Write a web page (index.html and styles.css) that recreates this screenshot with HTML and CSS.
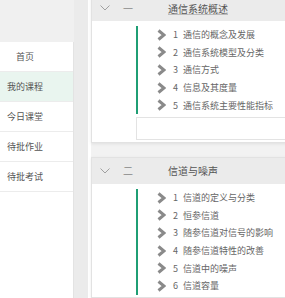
FILE: index.html
```html
<!DOCTYPE html>
<html lang="zh-CN">
<head>
    <meta charset="UTF-8">
    <meta name="viewport" content="width=device-width, initial-scale=1.0">
    <title>我的课程</title>
    <link rel="stylesheet" href="styles.css">
</head>
<body>
    <div class="page">
        <aside class="side">
            <nav class="menu">
                <a class="menu-item">首页</a>
                <a class="menu-item active">我的课程</a>
                <a class="menu-item">今日课堂</a>
                <a class="menu-item">待批作业</a>
                <a class="menu-item">待批考试</a>
            </nav>
        </aside>
        <div class="gutter"></div>

        <main class="main">
            <section class="chapter">
                <div class="chapter-head">
                    <svg class="toggle" width="10" height="6" viewBox="0 0 10 6"><polyline points="0.5,0.5 5,5 9.5,0.5" fill="none" stroke="#a0a0a0" stroke-width="1"/></svg>
                    <span class="chapter-no">一</span>
                    <span class="chapter-title linked">通信系统概述</span>
                </div>
                <div class="chapter-body">
                    <ul class="lessons">
                        <li><svg class="arrow" width="9" height="12" viewBox="0 0 9 12"><polyline points="1.5,1.5 7,6 1.5,10.5" fill="none" stroke="#8a8a8a" stroke-width="3"/></svg><span class="no">1</span>通信的概念及发展</li>
                        <li><svg class="arrow" width="9" height="12" viewBox="0 0 9 12"><polyline points="1.5,1.5 7,6 1.5,10.5" fill="none" stroke="#8a8a8a" stroke-width="3"/></svg><span class="no">2</span>通信系统模型及分类</li>
                        <li><svg class="arrow" width="9" height="12" viewBox="0 0 9 12"><polyline points="1.5,1.5 7,6 1.5,10.5" fill="none" stroke="#8a8a8a" stroke-width="3"/></svg><span class="no">3</span>通信方式</li>
                        <li><svg class="arrow" width="9" height="12" viewBox="0 0 9 12"><polyline points="1.5,1.5 7,6 1.5,10.5" fill="none" stroke="#8a8a8a" stroke-width="3"/></svg><span class="no">4</span>信息及其度量</li>
                        <li><svg class="arrow" width="9" height="12" viewBox="0 0 9 12"><polyline points="1.5,1.5 7,6 1.5,10.5" fill="none" stroke="#8a8a8a" stroke-width="3"/></svg><span class="no">5</span>通信系统主要性能指标</li>
                    </ul>
                    <div class="note-box"></div>
                </div>
            </section>

            <section class="chapter">
                <div class="chapter-head">
                    <svg class="toggle" width="10" height="6" viewBox="0 0 10 6"><polyline points="0.5,0.5 5,5 9.5,0.5" fill="none" stroke="#a0a0a0" stroke-width="1"/></svg>
                    <span class="chapter-no">二</span>
                    <span class="chapter-title">信道与噪声</span>
                </div>
                <div class="chapter-body">
                    <ul class="lessons">
                        <li><svg class="arrow" width="9" height="12" viewBox="0 0 9 12"><polyline points="1.5,1.5 7,6 1.5,10.5" fill="none" stroke="#8a8a8a" stroke-width="3"/></svg><span class="no">1</span>信道的定义与分类</li>
                        <li><svg class="arrow" width="9" height="12" viewBox="0 0 9 12"><polyline points="1.5,1.5 7,6 1.5,10.5" fill="none" stroke="#8a8a8a" stroke-width="3"/></svg><span class="no">2</span>恒参信道</li>
                        <li><svg class="arrow" width="9" height="12" viewBox="0 0 9 12"><polyline points="1.5,1.5 7,6 1.5,10.5" fill="none" stroke="#8a8a8a" stroke-width="3"/></svg><span class="no">3</span>随参信道对信号的影响</li>
                        <li><svg class="arrow" width="9" height="12" viewBox="0 0 9 12"><polyline points="1.5,1.5 7,6 1.5,10.5" fill="none" stroke="#8a8a8a" stroke-width="3"/></svg><span class="no">4</span>随参信道特性的改善</li>
                        <li><svg class="arrow" width="9" height="12" viewBox="0 0 9 12"><polyline points="1.5,1.5 7,6 1.5,10.5" fill="none" stroke="#8a8a8a" stroke-width="3"/></svg><span class="no">5</span>信道中的噪声</li>
                        <li><svg class="arrow" width="9" height="12" viewBox="0 0 9 12"><polyline points="1.5,1.5 7,6 1.5,10.5" fill="none" stroke="#8a8a8a" stroke-width="3"/></svg><span class="no">6</span>信道容量</li>
                    </ul>
                </div>
            </section>
        </main>
    </div>
</body>
</html>
```

FILE: styles.css
```css
body {
    font-family: "Noto Sans CJK SC", "Noto Sans", sans-serif;
    background-color: #f0f0f0;
    margin: 0;
    padding: 0;
}
.page {
    display: flex;
    height: 298px;
    overflow: hidden;
}
.side {
    width: 74px;
    flex: none;
    padding-top: 42px;
    box-sizing: border-box;
}
.menu {
    height: 100%;
    background-color: #fff;
    border-right: 1px solid #e3e3e3;
}
.menu-item {
    display: block;
    height: 29px;
    line-height: 29px;
    padding-right: 23px;
    text-align: center;
    font-size: 9px;
    color: #555;
    border-bottom: 1px solid #ececec;
}
.menu-item.active {
    background-color: #e9f5ef;
}
.gutter {
    width: 14px;
    flex: none;
    background-color: #ebebeb;
}
.main {
    flex: 1;
    margin-top: -6px;
    border-left: 3px solid #fff;
    background-color: #f2f2f2;
}
.chapter {
    background-color: #fff;
    border: 1px solid #e2e2e2;
    margin: 0 -12px 14px 0;
    box-shadow: 0 1px 3px rgba(0, 0, 0, 0.08);
}
.chapter-head {
    display: flex;
    align-items: center;
    height: 26px;
    padding-left: 8px;
    background-color: #ebebeb;
    font-size: 10px;
}
.chapter-no {
    margin-left: 13px;
    width: 10px;
    color: #888;
}
.chapter-title {
    margin-left: 35px;
    color: #555;
}
.chapter-title.linked {
    text-decoration: underline;
    text-decoration-color: #bbb;
}
.chapter-body {
    padding: 5px 0 2px 44px;
}
.lessons {
    list-style: none;
    margin: 0;
    padding: 0 0 0 19px;
    border-left: 2px solid #1f9e74;
}
.lessons li {
    display: flex;
    align-items: center;
    height: 17.6px;
    font-size: 9px;
    color: #666;
    white-space: nowrap;
}
.arrow {
    flex: none;
}
.no {
    margin: 0 5px 0 7px;
}
.note-box {
    height: 21px;
    margin-top: 3px;
    border: 1px solid #e3e3e3;
}
```
